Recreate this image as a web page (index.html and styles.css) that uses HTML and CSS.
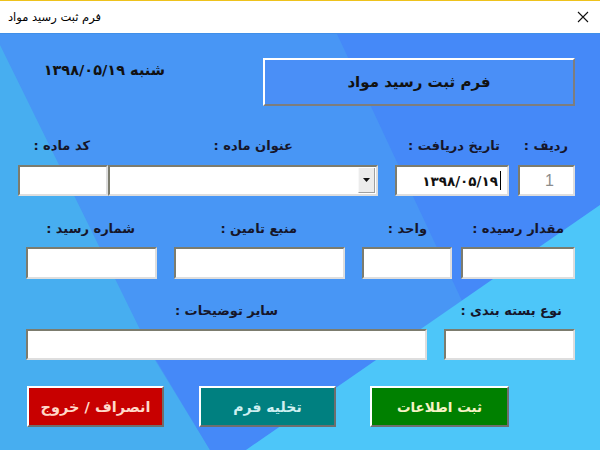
FILE: index.html
```html
<!DOCTYPE html>
<html lang="fa">
<head>
<meta charset="utf-8">
<title>فرم ثبت رسید مواد</title>
<link rel="stylesheet" href="styles.css">
</head>
<body>
<div class="window">
  <svg class="bg" width="600" height="450" viewBox="0 0 600 450" aria-hidden="true">
    <rect x="0" y="0" width="600" height="450" fill="#4896f5"/>
    <polygon points="337,34 600,34 600,205 462,301" fill="#4589f8"/>
    <polygon points="0,34 0,45 155,360 210,450 0,450" fill="#47aef0"/>
    <polygon points="150,350 391,350 246,450 210,450" fill="#4589f8"/>
    <polygon points="600,205 600,450 246,450" fill="#4dc6f9"/>
  </svg>
  <div class="titlebar">
    <span class="title">فرم ثبت رسید مواد</span>
    <svg class="close" width="12" height="12" viewBox="0 0 12 12" aria-hidden="true">
      <path d="M1 1 L11 11 M11 1 L1 11" stroke="#111" stroke-width="1.1" fill="none"/>
    </svg>
  </div>
  <div class="content">
    <div class="header">
      <div class="today">شنبه ۱۳۹۸/۰۵/۱۹</div>
      <div class="banner">فرم ثبت رسید مواد</div>
    </div>

    <div class="labels r1">
      <div class="lbl w90">کد ماده :</div>
      <div class="lbl w203">عنوان ماده :</div>
      <div class="lbl w207">تاریخ دریافت :</div>
      <div class="lbl w68">ردیف :</div>
    </div>
    <div class="fields f1">
      <div class="box code"></div>
      <div class="box combo"><span class="drop"><svg width="7" height="4" viewBox="0 0 7 4"><path d="M0 0 H7 L3.5 4 Z" fill="#111"/></svg></span></div>
      <div class="box date"><span class="dtext">۱۳۹۸/۰۵/۱۹</span><span class="caret"></span></div>
      <div class="box rowno">1</div>
    </div>

    <div class="labels r2">
      <div class="lbl w135">شماره رسید :</div>
      <div class="lbl w162">منبع تامین :</div>
      <div class="lbl w130">واحد :</div>
      <div class="lbl w137">مقدار رسیده :</div>
    </div>
    <div class="fields f2">
      <div class="box receipt"></div>
      <div class="box source"></div>
      <div class="box unit"></div>
      <div class="box qty"></div>
    </div>

    <div class="labels r3">
      <div class="lbl w278">سایر توضیحات :</div>
      <div class="lbl w284">نوع بسته بندی :</div>
    </div>
    <div class="fields f3">
      <div class="box notes"></div>
      <div class="box pack"></div>
    </div>

    <div class="buttons">
      <div class="btn exit">انصراف / خروج</div>
      <div class="btn clear">تخلیه فرم</div>
      <div class="btn save">ثبت اطلاعات</div>
    </div>
  </div>
</div>
</body>
</html>
```

FILE: styles.css
```css
* { box-sizing: border-box; }
html, body { margin: 0; padding: 0; }
body {
  width: 600px;
  height: 450px;
  overflow: hidden;
  font-family: "DejaVu Sans", sans-serif;
  background: #4896f5;
}
.window {
  position: relative;
  width: 600px;
  height: 450px;
  border-bottom: 2px solid #eec21c;
}
.bg {
  position: absolute;
  left: 0;
  top: 0;
  z-index: 0;
}
.titlebar {
  position: relative;
  z-index: 1;
  height: 34px;
  background: #ffffff;
  border-top: 1px solid #eec21c;
  border-bottom: 1px solid #3f8fe8;
  display: flex;
  align-items: center;
  justify-content: space-between;
  padding: 0 11px 1px 8px;
}
.title {
  font-size: 11.5px;
  color: #000;
  direction: rtl;
}
.content {
  position: relative;
  z-index: 1;
  height: 414px;
}
.header {
  display: flex;
  margin-top: 24px;
  height: 48px;
}
.today {
  margin-left: 38px;
  width: 127px;
  padding-top: 4px;
  direction: rtl;
  text-align: right;
  font-size: 14.5px;
  font-weight: bold;
  color: #111;
  white-space: nowrap;
}
.banner {
  margin-left: 98px;
  width: 312px;
  height: 48px;
  background: #4a8ff7;
  border: 2px solid;
  border-color: #ffffff #7d7d7d #7d7d7d #ffffff;
  display: flex;
  align-items: center;
  justify-content: center;
  direction: rtl;
  font-size: 15px;
  font-weight: bold;
  color: #111;
}
.labels {
  display: flex;
  height: 20px;
  align-items: center;
}
.lbl {
  text-align: right;
  direction: rtl;
  font-size: 13px;
  font-weight: bold;
  color: #16162a;
  white-space: nowrap;
}
.w90 { width: 90px; }
.w203 { width: 203px; }
.w207 { width: 207px; }
.w68 { width: 68px; }
.w135 { width: 135px; }
.w162 { width: 162px; }
.w130 { width: 130px; }
.w137 { width: 137px; }
.w278 { width: 278px; }
.w284 { width: 284px; }
.r1 { margin-top: 29px; }
.r2 { margin-top: 22px; }
.r3 { margin-top: 21px; }
.fields {
  display: flex;
  margin-top: 10px;
}
.f2, .f3 { margin-top: 9px; }
.f1 { padding-left: 18px; height: 31px; }
.f2 { padding-left: 26px; height: 32px; }
.f3 { padding-left: 26px; height: 31px; }
.box {
  height: 100%;
  background: #ffffff;
  border: 2px solid;
  border-color: #7c7c6e #dedede #dedede #7c7c6e;
}
.code { width: 90px; }
.combo {
  width: 270px;
  display: flex;
  justify-content: flex-end;
  padding: 1px 1px 1px 0;
}
.drop {
  width: 17px;
  height: 100%;
  background: #ececec;
  border-left: 1px solid #f8f8f8;
  border-right: 1px solid #a0a0a0;
  border-bottom: 1px solid #a0a0a0;
  display: flex;
  align-items: center;
  justify-content: center;
}
.date {
  margin-left: 17px;
  width: 114px;
  display: flex;
  align-items: center;
  justify-content: flex-end;
  padding-right: 6px;
}
.dtext {
  font-size: 13.5px;
  font-weight: bold;
  color: #111;
}
.caret {
  width: 1px;
  height: 19px;
  background: #000;
  margin-left: 2px;
}
.rowno {
  margin-left: 9px;
  width: 57px;
  display: flex;
  align-items: center;
  justify-content: center;
  font-family: "Liberation Sans", sans-serif;
  font-size: 16px;
  color: #8c8c8c;
  padding-left: 6px;
}
.receipt { width: 131px; }
.source { margin-left: 17px; width: 171px; }
.unit { margin-left: 17px; width: 90px; }
.qty { margin-left: 9px; width: 114px; }
.notes { width: 401px; }
.pack { margin-left: 17px; width: 131px; }
.buttons {
  display: flex;
  margin-top: 26px;
  padding-left: 27px;
  height: 41px;
}
.btn {
  width: 137px;
  height: 41px;
  border: 2px solid;
  border-color: #ffffff #6e6e6e #6e6e6e #ffffff;
  display: flex;
  align-items: center;
  justify-content: center;
  direction: rtl;
  font-size: 13.5px;
  font-weight: bold;
}
.exit { background: #c80000; color: #ffd9c9; font-size: 14.5px; }
.clear { margin-left: 35px; background: #008080; color: #cdeff0; font-size: 14px; }
.save { margin-left: 34px; width: 139px; background: #008000; color: #f6f2c4; }
```
